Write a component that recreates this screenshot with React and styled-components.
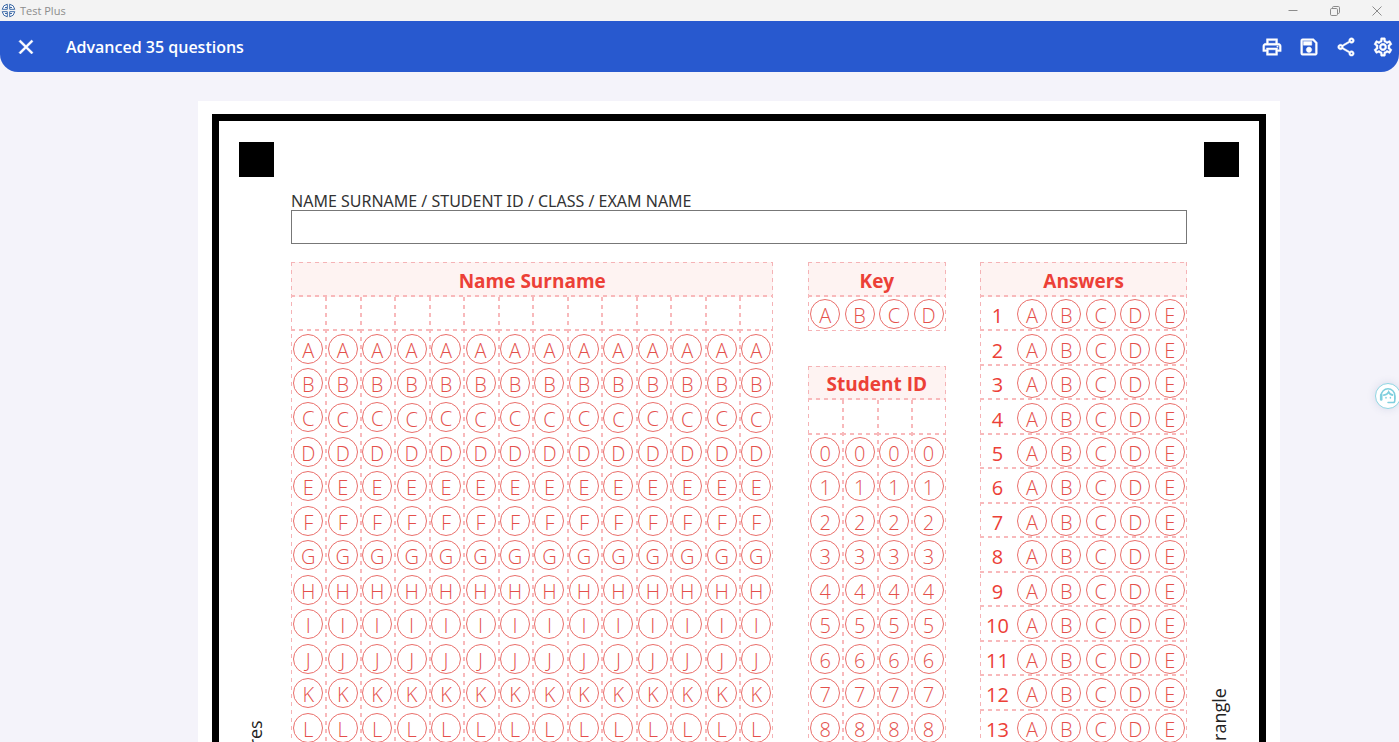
import React from 'react'
import styled, { createGlobalStyle, css } from 'styled-components'
import { MdClose, MdOutlinePrint, MdOutlineSave, MdOutlineShare, MdOutlineSettings } from 'react-icons/md'

const NAME_COLUMNS = 14;
const ID_COLUMNS = 4;
const LETTERS = 'ABCDEFGHIJKL'.split('');
const DIGITS = '012345678'.split('');
const KEYS = ['A', 'B', 'C', 'D'];
const CHOICES = ['A', 'B', 'C', 'D', 'E'];
const QUESTIONS = Array.from({ length: 13 }, (_, i) => i + 1);

const range = (n) => Array.from({ length: n }, (_, i) => i);

const LetterGrid = ({ title, columns, values }) => (
    <Panel>
        <PanelTitle $columns={columns}>{title}</PanelTitle>
        <Columns $columns={columns}>
            {range(columns).map((column) => (
                <Column key={column}>
                    <WriteCell />
                    {values.map((value) => (
                        <Cell key={value}>
                            <Bubble>{value}</Bubble>
                        </Cell>
                    ))}
                </Column>
            ))}
        </Columns>
    </Panel>
)

const KeyPanel = () => (
    <Panel>
        <PanelTitle $columns={ID_COLUMNS}>Key</PanelTitle>
        <Columns $columns={ID_COLUMNS}>
            {KEYS.map((key) => (
                <Cell key={key}>
                    <Bubble>{key}</Bubble>
                </Cell>
            ))}
        </Columns>
    </Panel>
)

const AnswersPanel = () => (
    <Panel>
        <PanelTitle $columns={6}>Answers</PanelTitle>
        {QUESTIONS.map((number) => (
            <AnswerRow key={number}>
                <Cell>
                    <QuestionNumber>{number}</QuestionNumber>
                </Cell>
                {CHOICES.map((choice) => (
                    <Cell key={choice}>
                        <Bubble>{choice}</Bubble>
                    </Cell>
                ))}
            </AnswerRow>
        ))}
    </Panel>
)

const TitleBar = () => (
    <WindowBar>
        <svg width="15" height="15" viewBox="0 0 15 15" fill="#fff" stroke="#3c69a6">
            <path d="M6.3 6.3H1.2A6.200 6.200 0 016.300 1.200zM8.700 6.300h5.100A6.200 6.200 0 008.700 1.200zM6.300 8.700H1.200a6.200 6.200 0 005.100 5.100zM8.700 8.700h5.100a6.200 6.200 0 01-5.100 5.100z" />
            <path d="M4 4.500h2M9 4.500h2M4 10.500h2M9 10.500h2" />
        </svg>
        <WindowName>Test Plus</WindowName>
        <WindowButton aria-label="Minimize">
            <svg width="10" height="10" viewBox="0 0 10 10" fill="none" stroke="currentColor"><path d="M.5 4.5h9" /></svg>
        </WindowButton>
        <WindowButton aria-label="Restore">
            <svg width="10" height="10" viewBox="0 0 10 10" fill="none" stroke="currentColor">
                <rect x=".5" y="2.5" width="7" height="7" rx="1.2" />
                <path d="M2.5 2.3V1.7A1.2 1.2 0 013.7.5h4.6a1.2 1.2 0 011.2 1.2v4.6a1.2 1.2 0 01-1.2 1.2h-.6" />
            </svg>
        </WindowButton>
        <WindowButton aria-label="Close window">
            <svg width="10" height="10" viewBox="0 0 10 10" fill="none" stroke="currentColor"><path d="M.5.5l9 9M9.5.5l-9 9" /></svg>
        </WindowButton>
    </WindowBar>
)

const App = () => {
    return (
        <Window>
            <GlobalStyle />
            <TitleBar />
            <AppBar>
                <IconButton aria-label="Close"><MdClose size={24} /></IconButton>
                <h1>Advanced 35 questions</h1>
                <Actions>
                    <IconButton aria-label="Print"><MdOutlinePrint size={22} /></IconButton>
                    <IconButton aria-label="Save"><MdOutlineSave size={22} /></IconButton>
                    <IconButton aria-label="Share"><MdOutlineShare size={22} /></IconButton>
                    <IconButton aria-label="Settings"><MdOutlineSettings size={22} /></IconButton>
                </Actions>
            </AppBar>

            <Viewer>
                <Sheet>
                    <Frame>
                        <Markers>
                            <Marker />
                            <Marker />
                        </Markers>
                        <FormBody>
                            <SideNote>squares</SideNote>
                            <Form>
                                <FieldLabel>NAME SURNAME / STUDENT ID / CLASS / EXAM NAME</FieldLabel>
                                <FieldBox />
                                <Panels>
                                    <PanelSlot $from={1} $to={15}>
                                        <LetterGrid title="Name Surname" columns={NAME_COLUMNS} values={LETTERS} />
                                    </PanelSlot>
                                    <PanelSlot $from={16} $to={20}>
                                        <KeyPanel />
                                        <LetterGrid title="Student ID" columns={ID_COLUMNS} values={DIGITS} />
                                    </PanelSlot>
                                    <PanelSlot $from={21} $to={27}>
                                        <AnswersPanel />
                                    </PanelSlot>
                                </Panels>
                            </Form>
                            <SideNote $right>quadrangle</SideNote>
                        </FormBody>
                    </Frame>
                </Sheet>
            </Viewer>

            <SupportButton aria-label="Support">
                <svg width="20" height="20" viewBox="0 0 20 20" fill="none" stroke="#7fcfde" strokeLinecap="round">
                    <path d="M3.2 13.5V9.5a6.8 6.8 0 0113.6 0v5.2a1.8 1.8 0 01-1.8 1.8H10" strokeWidth="1.5" />
                    <path d="M3.2 9v4.5" strokeWidth="2.6" />
                    <path d="M5.8 9.2c2.4-.3 4-1.4 4.8-3.2.8 1.6 2 2.6 3.8 3" strokeWidth="1.8" />
                    <path d="M8 11.5v.4M12.4 11.5v.4M16.8 10v3" strokeWidth="1.5" />
                </svg>
            </SupportButton>
        </Window>
    )
}

export default App

const GlobalStyle = createGlobalStyle`
*{
    box-sizing: border-box;
}
body{
    margin: 0;
    font-family: "Open Sans", "Noto Sans", sans-serif;
    background: #f4f3fa;
}
button{
    border: 0;
    padding: 0;
    background: none;
    color: inherit;
}
`;

/* dashed rules are painted as backgrounds so they never take up room in the grid */
const dashes = (angle, color) => `repeating-linear-gradient(${angle}deg, ${color} 0 4px, transparent 4px 8px)`;
const line = '#f8b9bb';
const paleLine = '#f5b3b6';

const Window = styled.div`
position: relative;
display: flex;
flex-direction: column;
height: 100vh;
overflow: hidden;
`;

const WindowBar = styled.div`
flex: none;
display: flex;
align-items: center;
height: 21px;
padding: 0 1px;
background: #f3f3f3;
color: #8c8c8c;
`;

const WindowName = styled.span`
flex: 1;
margin-left: 4px;
font-size: 11px;
line-height: 20px;
`;

const WindowButton = styled.button`
display: flex;
align-items: center;
justify-content: center;
width: 42px;
height: 20px;
`;

const AppBar = styled.header`
flex: none;
display: flex;
align-items: center;
height: 51px;
padding: 0 5px 0 14px;
border-radius: 0 0 18px 18px;
background: #2859cf;
color: #fff;

h1{
    flex: 1;
    margin: 0 0 0 28px;
    font-size: 16px;
    font-weight: 600;
    line-height: 24px;
}
`;

const Actions = styled.div`
display: flex;
gap: 15px;
`;

const IconButton = styled.button`
display: flex;
cursor: pointer;

path:not([fill="none"]){
    stroke-width: .5px;
}
`;

const Viewer = styled.main`
flex: 1;
min-height: 0;
overflow: hidden;
padding: 29px 119px 0 198px;
`;

const Sheet = styled.article`
padding: 13px 14px;
background: #fff;
`;

const Frame = styled.div`
border: 7px solid #000;
padding-bottom: 72px;
`;

const Markers = styled.div`
display: flex;
justify-content: space-between;
padding: 21px 20px 0;
`;

const Marker = styled.span`
width: 35px;
height: 35px;
background: #000;
`;

const FormBody = styled.div`
display: grid;
grid-template-columns: 72px minmax(0, 1fr) 72px;
padding-top: 16px;
`;

const SideNote = styled.p`
justify-self: center;
margin: ${({ $right }) => ($right ? '495px 8px 0 0' : '527px 0 0 0')};
height: 100px;
writing-mode: vertical-rl;
transform: rotate(180deg);
text-align: end;
font-size: 18px;
line-height: 24px;
color: #222;
`;

const Form = styled.section`
min-width: 0;
`;

const FieldLabel = styled.p`
margin: 0;
font-family: "Noto Sans", sans-serif;
font-size: 16px;
font-weight: 400;
line-height: 17px;
white-space: nowrap;
color: #333;
`;

const FieldBox = styled.div`
aspect-ratio: 26 / 1;
border: 1px solid #777;
`;

const Panels = styled.div`
display: grid;
grid-template-columns: repeat(26, minmax(0, 1fr));
align-items: start;
margin-top: 18px;
`;

const PanelSlot = styled.div`
grid-column: ${({ $from, $to }) => `${$from} / ${$to}`};
`;

const Panel = styled.div`
color: #ec4037;
background:
    ${dashes(180, paleLine)} left top / 1px 100% no-repeat,
    ${dashes(180, paleLine)} right top / 1px 100% no-repeat,
    ${dashes(90, paleLine)} left bottom / 100% 1px no-repeat;

& + &{
    margin-top: 25%;
}
`;

const PanelTitle = styled.h2`
display: flex;
align-items: center;
justify-content: center;
aspect-ratio: ${({ $columns }) => $columns} / 1;
margin: 0;
padding-top: 2px;
font-size: 19px;
font-weight: 700;
line-height: 24px;
background:
    ${dashes(90, paleLine)} left top / 100% 1px no-repeat,
    ${dashes(90, line)} left bottom / 100% 2px no-repeat,
    ${dashes(180, paleLine)} left top / 1px 100% no-repeat,
    ${dashes(180, paleLine)} right top / 1px 100% no-repeat,
    #fef3f2;
`;

const Columns = styled.div`
display: grid;
grid-template-columns: repeat(${({ $columns }) => $columns}, minmax(0, 1fr));
`;

const Column = styled.div`
background: ${dashes(180, line)} left top / 2px 100% no-repeat;

&:first-child{
    background: none;
}
`;

const cellBox = css`
display: flex;
align-items: center;
justify-content: center;
aspect-ratio: 1;
`;

const Cell = styled.div`
${cellBox}
`;

const WriteCell = styled.div`
${cellBox}
background: ${dashes(90, line)} left bottom / 100% 2px no-repeat;
`;

const Bubble = styled.span`
display: flex;
align-items: center;
justify-content: center;
width: 30px;
height: 30px;
padding-top: 4px;
border: 1px solid #ea6f6b;
border-radius: 50%;
font-size: 20px;
font-weight: 350;
line-height: 24px;
color: #e4504b;
`;

const AnswerRow = styled.div`
display: grid;
grid-template-columns: repeat(6, minmax(0, 1fr));
background: ${dashes(90, line)} left bottom / 100% 2px no-repeat;
`;

const QuestionNumber = styled.span`
padding-top: 4px;
font-size: 20px;
font-weight: 500;
line-height: 24px;
`;

const SupportButton = styled.button`
position: absolute;
top: 383px;
right: -2px;
display: flex;
align-items: center;
justify-content: center;
width: 26px;
height: 26px;
border: 1px solid #8fd6e3;
border-radius: 50%;
background: #fff;
box-shadow: 0 0 8px rgba(60, 80, 140, .15);
cursor: pointer;
`;
